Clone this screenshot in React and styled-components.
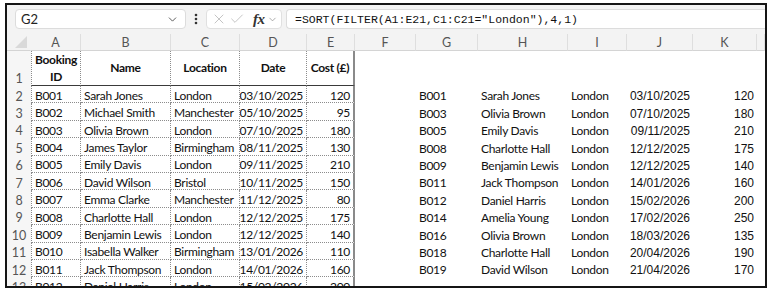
import React from 'react';
import styled, { createGlobalStyle, css } from 'styled-components';
import { ChevronDown, X, Check } from 'lucide-react';

const GlobalStyle = createGlobalStyle`
  body {
    margin: 0;
    background: #ffffff;
  }
`;

const aptos = `Lato, "Open Sans", "Noto Sans", sans-serif`;
const arial = `"Liberation Sans", Arial, sans-serif`;

const Frame = styled.div`
  margin: 3px 0 0 5px;
  width: 762px;
  height: 285px;
  box-sizing: border-box;
  border: 2px solid #151515;
  overflow: hidden;
  display: flex;
  flex-direction: column;
  background: #ffffff;
`;

const FormulaBar = styled.div`
  height: 29px;
  flex-shrink: 0;
  background: #f3f3f3;
  display: flex;
  align-items: flex-start;
  padding: 4px 0 0 8px;
  box-sizing: border-box;
`;

const NameBox = styled.div`
  width: 171px;
  height: 20px;
  box-sizing: border-box;
  background: #ffffff;
  border: 1px solid #dcdcdc;
  border-radius: 4px;
  display: flex;
  align-items: center;
  justify-content: space-between;
  padding: 0 6px 0 5px;
  font-family: ${aptos};
  font-size: 13px;
  color: #222;
`;

const Grip = styled.div`
  width: 20px;
  height: 20px;
  display: flex;
  align-items: center;
  justify-content: center;
`;

const FxGroup = styled.div`
  width: 76px;
  height: 20px;
  box-sizing: border-box;
  background: #ffffff;
  border: 1px solid #e0e0e0;
  border-radius: 4px;
  display: flex;
  align-items: center;
  padding: 0 3px 0 4px;
  gap: 2px;
`;

const Fx = styled.span`
  font-family: "Liberation Serif", "DejaVu Serif", serif;
  font-style: italic;
  font-weight: 700;
  font-size: 15px;
  color: #333;
  margin-left: 6px;
  letter-spacing: -0.5px;
`;

const FormulaInput = styled.div`
  flex: 1;
  height: 20px;
  margin-left: 4px;
  box-sizing: border-box;
  background: #ffffff;
  border: 1px solid #dcdcdc;
  border-right: none;
  border-radius: 4px 0 0 4px;
  display: flex;
  align-items: center;
  padding-left: 8px;
  font-family: "Liberation Mono", "DejaVu Sans Mono", monospace;
  font-size: 11.5px;
  color: #111;
  white-space: pre;
`;

const Sheet = styled.div`
  display: grid;
  grid-template-columns: 24px 50px 90px 69px 67px 48px 61px 62px 90px 59px 66px 64px 1fr;
  grid-template-rows: 17px 35px repeat(12, 17.4px);
  flex: 1;
`;

const ColHead = styled.div`
  background: #f3f3f3;
  border-bottom: 1px solid #d4d4d4;
  border-right: 1px solid ${p => (p.$corner ? 'transparent' : '#dedede')};
  display: flex;
  align-items: center;
  justify-content: center;
  font-family: ${aptos};
  font-size: 12.5px;
  color: #555;
  position: relative;
`;

const Corner = styled.div`
  position: absolute;
  right: 3px;
  bottom: 2px;
  width: 0;
  height: 0;
  border-left: 12px solid transparent;
  border-bottom: 12px solid #d9d9d9;
`;

const RowHead = styled.div`
  background: #f6f6f6;
  display: flex;
  align-items: ${p => (p.$tall ? 'flex-end' : 'center')};
  justify-content: center;
  padding: ${p => (p.$tall ? '0 0 1px' : '3px 0 0')};
  line-height: ${p => (p.$tall ? 1 : 'normal')};
  box-sizing: border-box;
  font-family: ${aptos};
  font-size: 12.5px;
  color: #555;
`;

const tableBorders = css`
  border-right: 1px dotted #8c8c8c;
  border-bottom: 1px dotted #8c8c8c;
`;

const Cell = styled.div`
  display: flex;
  align-items: center;
  justify-content: ${p =>
    p.$align === 'right' ? 'flex-end' : p.$align === 'center' ? 'center' : 'flex-start'};
  text-align: ${p => p.$align || 'left'};
  padding: ${p => (p.$headRow ? '0 2px' : p.$arial ? '5px 3px 0' : '3px 3px 0')};
  box-sizing: border-box;
  overflow: hidden;
  white-space: nowrap;
  font-family: ${p => (p.$arial ? arial : aptos)};
  font-size: 12px;
  letter-spacing: ${p => (p.$arial ? '0' : '-0.3px')};
  font-weight: ${p => (p.$bold ? 700 : 400)};
  line-height: ${p => (p.$headRow ? 1.45 : 1.3)};
  color: #111;
  ${p => p.$table && tableBorders}
  ${p => p.$first && css`border-left: 1px dotted #8c8c8c;`}
  ${p => p.$headRow && css`border-bottom: 1px solid #3a3a3a;`}
  ${p => p.$edge && css`border-right: 2px solid #8a8a8a;`}
`;

const letters = ['A', 'B', 'C', 'D', 'E', 'F', 'G', 'H', 'I', 'J', 'K', ''];

const bookings = [
  ['B001', 'Sarah Jones', 'London', '03/10/2025', 120],
  ['B002', 'Michael Smith', 'Manchester', '05/10/2025', 95],
  ['B003', 'Olivia Brown', 'London', '07/10/2025', 180],
  ['B004', 'James Taylor', 'Birmingham', '08/11/2025', 130],
  ['B005', 'Emily Davis', 'London', '09/11/2025', 210],
  ['B006', 'David Wilson', 'Bristol', '10/11/2025', 150],
  ['B007', 'Emma Clarke', 'Manchester', '11/12/2025', 80],
  ['B008', 'Charlotte Hall', 'London', '12/12/2025', 175],
  ['B009', 'Benjamin Lewis', 'London', '12/12/2025', 140],
  ['B010', 'Isabella Walker', 'Birmingham', '13/01/2026', 110],
  ['B011', 'Jack Thompson', 'London', '14/01/2026', 160],
  ['B012', 'Daniel Harris', 'London', '15/02/2026', 200],
];

const london = [
  ['B001', 'Sarah Jones', 'London', '03/10/2025', 120],
  ['B003', 'Olivia Brown', 'London', '07/10/2025', 180],
  ['B005', 'Emily Davis', 'London', '09/11/2025', 210],
  ['B008', 'Charlotte Hall', 'London', '12/12/2025', 175],
  ['B009', 'Benjamin Lewis', 'London', '12/12/2025', 140],
  ['B011', 'Jack Thompson', 'London', '14/01/2026', 160],
  ['B012', 'Daniel Harris', 'London', '15/02/2026', 200],
  ['B014', 'Amelia Young', 'London', '17/02/2026', 250],
  ['B016', 'Olivia Brown', 'London', '18/03/2026', 135],
  ['B018', 'Charlotte Hall', 'London', '20/04/2026', 190],
  ['B019', 'David Wilson', 'London', '21/04/2026', 170],
];

const headers = [['Booking', 'ID'], ['Name'], ['Location'], ['Date'], ['Cost (£)']];

const GripIcon = () => (
  <svg width="4" height="12" viewBox="0 0 4 12">
    <circle cx="2" cy="2" r="1.3" fill="#333" />
    <circle cx="2" cy="6" r="1.3" fill="#333" />
    <circle cx="2" cy="10" r="1.3" fill="#333" />
  </svg>
);

const App = () => {
  const renderTableRow = (row, idx) => {
    const right = london[idx];
    return (
      <React.Fragment key={idx}>
        <RowHead>{idx + 2}</RowHead>
        <Cell $table $first>{row[0]}</Cell>
        <Cell $table>{row[1]}</Cell>
        <Cell $table>{row[2]}</Cell>
        <Cell $table $align="right">{row[3]}</Cell>
        <Cell $table $edge $align="right">{row[4]}</Cell>
        <Cell />
        <Cell>{right ? right[0] : ''}</Cell>
        <Cell>{right ? right[1] : ''}</Cell>
        <Cell>{right ? right[2] : ''}</Cell>
        <Cell $arial $align="right">{right ? right[3] : ''}</Cell>
        <Cell $arial $align="right">{right ? right[4] : ''}</Cell>
        <Cell />
      </React.Fragment>
    );
  };

  return (
    <>
      <GlobalStyle />
      <Frame>
        <FormulaBar>
          <NameBox>
            <span>G2</span>
            <ChevronDown size={13} color="#444" strokeWidth={1.6} />
          </NameBox>
          <Grip>
            <GripIcon />
          </Grip>
          <FxGroup>
            <X size={16} color="#b5b5b5" strokeWidth={1.2} />
            <Check size={16} color="#b5b5b5" strokeWidth={1.2} />
            <Fx>fx</Fx>
            <ChevronDown size={11} color="#888" strokeWidth={1.5} />
          </FxGroup>
          <FormulaInput>=SORT(FILTER(A1:E21,C1:C21="London"),4,1)</FormulaInput>
        </FormulaBar>
        <Sheet>
          <ColHead $corner>
            <Corner />
          </ColHead>
          {letters.map((l, i) => (
            <ColHead key={i}>{l}</ColHead>
          ))}

          <RowHead $tall>1</RowHead>
          {headers.map((h, i) => (
            <Cell
              key={h[0]}
              $table
              $headRow
              $bold
              $align="center"
              $first={i === 0}
              $edge={i === 4}
            >
              <span>
                {h.map((line, j) => (
                  <React.Fragment key={line}>
                    {j > 0 && <br />}
                    {line}
                  </React.Fragment>
                ))}
              </span>
            </Cell>
          ))}
          <Cell />
          <Cell />
          <Cell />
          <Cell />
          <Cell />
          <Cell />
          <Cell />

          {bookings.map(renderTableRow)}
        </Sheet>
      </Frame>
    </>
  );
};

export default App;
